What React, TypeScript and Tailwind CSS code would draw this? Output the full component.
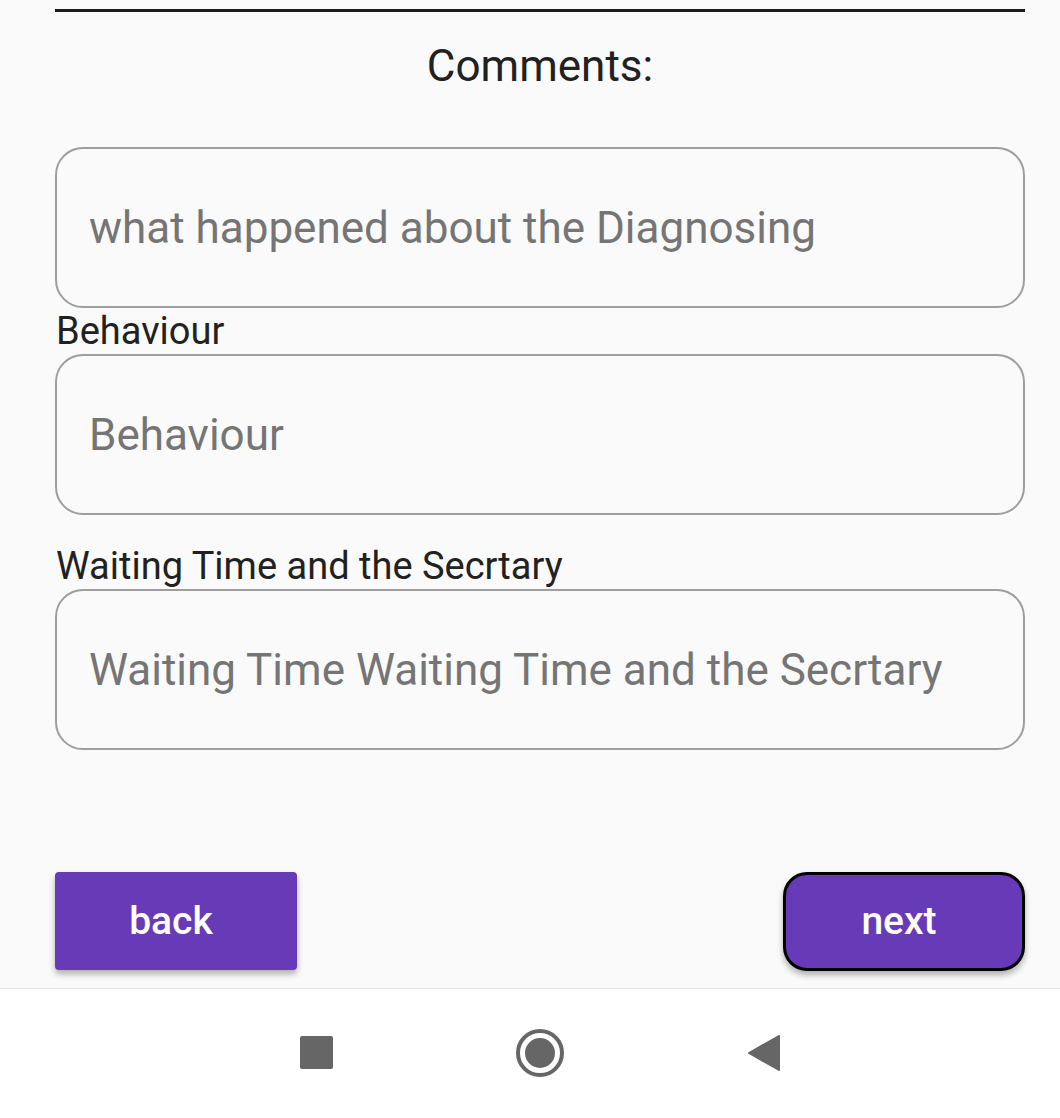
import React from "react";

const font = { fontFamily: "Roboto, 'Noto Sans', sans-serif" };

function Field({ placeholder }: { placeholder: string }) {
  return (
    <div className="h-[161px] w-full rounded-[28px] border-[2.5px] border-[#9e9e9e] flex items-center pl-[32px]">
      <span className="text-[44px] text-[#757575] leading-none">{placeholder}</span>
    </div>
  );
}

export default function App() {
  return (
    <div className="w-[1060px] h-[1118px] flex flex-col bg-[#fafafa]" style={font}>
      <div className="flex-1 pl-[55px] pr-[35px] flex flex-col">
        <div className="mt-[9px] h-[3px] bg-[#1c1c1c]" />
        <div className="mt-[30px] text-center text-[44px] leading-[48px] text-[#212121]">Comments:</div>
        <div className="mt-[57px]">
          <Field placeholder="what happened about the Diagnosing" />
        </div>
        <div className="text-[38px] leading-[46px] text-[#212121] pl-[1px]">Behaviour</div>
        <Field placeholder="Behaviour" />
        <div className="mt-[28px] text-[38px] leading-[46px] text-[#212121] pl-[1px]">
          Waiting Time and the Secrtary
        </div>
        <Field placeholder="Waiting Time Waiting Time and the Secrtary" />
        <div className="mt-auto mb-[17px] flex justify-between">
          <button className="w-[242px] h-[98px] rounded-[4px] bg-[#673ab7] text-white text-[39px] font-medium shadow-[0_4px_6px_rgba(0,0,0,0.3)] pr-[10px]">
            back
          </button>
          <button className="w-[242px] h-[99px] rounded-[24px] border-[3px] border-black bg-[#673ab7] text-white text-[39px] font-medium shadow-[0_4px_6px_rgba(0,0,0,0.3)] pr-[10px]">
            next
          </button>
        </div>
      </div>
      <div className="h-[130px] bg-white border-t border-[#e6e6e6] flex items-center justify-center gap-[182px] pl-[21px] pb-[2px]">
        <div className="w-[33px] h-[33px] rounded-[2px] bg-[#666666]" />
        <svg width="50" height="50" viewBox="0 0 50 50">
          <circle cx="25" cy="25" r="22" fill="none" stroke="#666666" strokeWidth="4" />
          <circle cx="25" cy="25" r="15" fill="#666666" />
        </svg>
        <svg width="34" height="38" viewBox="0 0 34 38">
          <path d="M32 2 L2 19 L32 36 Z" fill="#666666" stroke="#666666" strokeWidth="2" strokeLinejoin="round" />
        </svg>
      </div>
    </div>
  );
}
